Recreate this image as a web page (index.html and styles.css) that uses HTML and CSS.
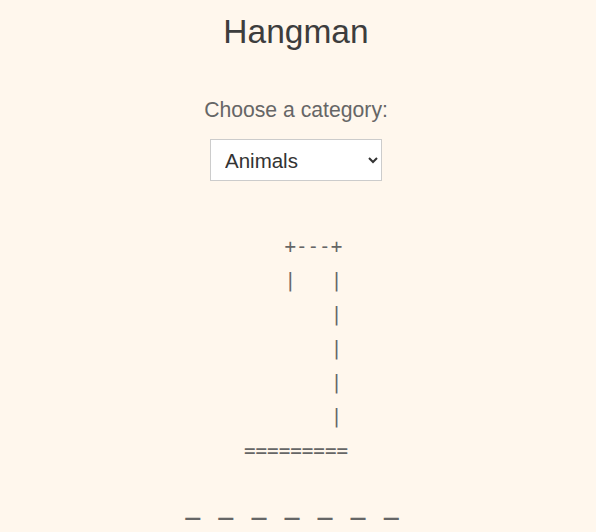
FILE: index.html
```html
<!DOCTYPE html>
<html lang="en">
<head>
<meta charset="utf-8">
<title>Hangman</title>
<link rel="stylesheet" href="styles.css">
</head>
<body>
<main class="game">
  <h1 class="title">Hangman</h1>
  <label class="label" for="category">Choose a category:</label>
  <select id="category" class="select">
    <option>Animals</option>
    <option>Fruits</option>
    <option>Countries</option>
  </select>
  <pre class="gallows">   +---+
   |   |
       |
       |
       |
       |
=========</pre>
  <div class="word">
    <span class="blank">_</span><span class="blank">_</span><span class="blank">_</span><span class="blank">_</span><span class="blank">_</span><span class="blank">_</span><span class="blank">_</span>
  </div>
</main>
</body>
</html>
```
FILE: styles.css
```css
html, body {
  margin: 0;
  padding: 0;
  background: #fff7ed;
}
body {
  font-family: "Liberation Sans", Arial, sans-serif;
  overflow: hidden;
}
.game {
  width: 592px;
  display: flex;
  flex-direction: column;
  align-items: center;
}
.title {
  margin: 12px 0 0;
  font-size: 33.5px;
  line-height: 40px;
  font-weight: normal;
  color: #3d3d3d;
}
.label {
  margin-top: 46px;
  font-size: 21.2px;
  line-height: 24px;
  color: #666;
}
.select {
  margin-top: 17px;
  width: 172px;
  height: 42px;
  box-sizing: border-box;
  padding: 0 8px 0 10px;
  font-family: "Liberation Sans", Arial, sans-serif;
  font-size: 20.5px;
  color: #333;
  background: #fff;
  border: 1px solid #ccc;
  border-radius: 0;
}
.gallows {
  align-self: stretch;
  margin: 49px 0 0;
  font-family: "DejaVu Sans Mono", "Liberation Mono", monospace;
  font-size: 19.2px;
  line-height: 34px;
  color: #666;
  text-align: center;
}
.word {
  margin-top: 23px;
  display: flex;
  gap: 18px;
  margin-left: -8px;
}
.blank {
  font-family: "DejaVu Sans Mono", monospace;
  font-size: 25px;
  font-weight: bold;
  line-height: 30px;
  color: #666;
}
```
